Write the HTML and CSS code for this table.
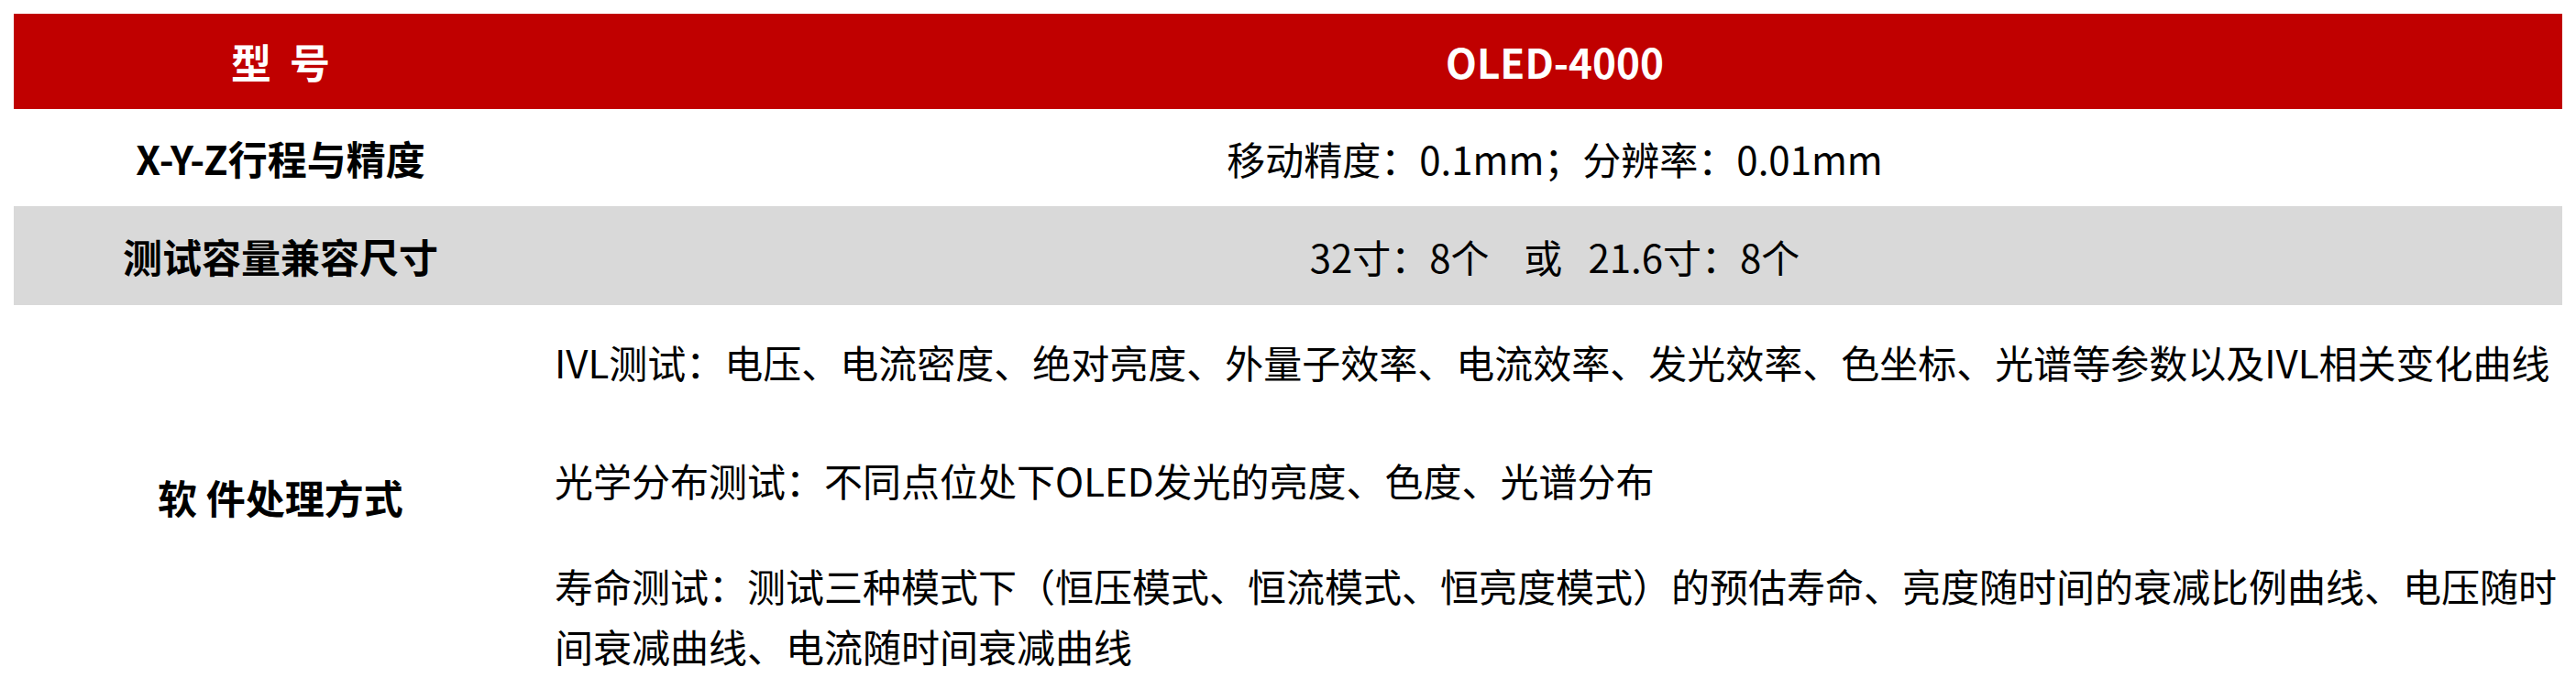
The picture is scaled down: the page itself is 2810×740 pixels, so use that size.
FILE: index.html
```html
<!DOCTYPE html>
<html lang="zh-CN">
<head>
<meta charset="utf-8">
<title>OLED-4000 规格</title>
<link rel="stylesheet" href="styles.css">
</head>
<body>
<div class="page">
  <table class="spec">
    <colgroup>
      <col class="col-label">
      <col class="col-value">
    </colgroup>
    <thead>
      <tr class="row-head">
        <th class="cell-label">型&nbsp;&nbsp;号</th>
        <th class="cell-value">OLED-4000</th>
      </tr>
    </thead>
    <tbody>
      <tr class="row-a">
        <td class="cell-label">X-Y-Z行程与精度</td>
        <td class="cell-value">移动精度：0.1mm；分辨率：0.01mm</td>
      </tr>
      <tr class="row-b">
        <td class="cell-label">测试容量兼容尺寸</td>
        <td class="cell-value">32寸：8个&nbsp;&nbsp;&nbsp;&nbsp;或&nbsp;&nbsp;&nbsp;21.6寸：8个</td>
      </tr>
      <tr class="row-c">
        <td class="cell-label">软&nbsp;件处理方式</td>
        <td class="cell-text">
          <p class="para para-1">IVL测试：电压、电流密度、绝对亮度、外量子效率、电流效率、发光效率、色坐标、光谱等参数以及IVL相关变化曲线</p>
          <p class="para para-2">光学分布测试：不同点位处下OLED发光的亮度、色度、光谱分布</p>
          <p class="para para-3">寿命测试：测试三种模式下（恒压模式、恒流模式、恒亮度模式）的预估寿命、亮度随时间的衰减比例曲线、电压随时间衰减曲线、电流随时间衰减曲线</p>
        </td>
      </tr>
    </tbody>
  </table>
</div>
</body>
</html>
```
FILE: styles.css
```css
html, body {
  margin: 0;
  padding: 0;
  background: #ffffff;
}

.page {
  padding: 15px 15px 0 15px;
  font-family: "Noto Sans CJK SC", "Noto Sans", sans-serif;
  color: #000000;
}

.spec {
  width: 2780px;
  table-layout: fixed;
  border-collapse: collapse;
  border-spacing: 0;
}

.col-label { width: 582px; }
.col-value { width: 2198px; }

.spec th,
.spec td {
  padding: 0;
  vertical-align: middle;
}

.cell-label {
  text-align: center;
  font-size: 43px;
  font-weight: 700;
}

.cell-value {
  text-align: center;
  font-size: 42px;
  font-weight: 400;
}

.row-head {
  height: 104px;
  background: #c00000;
  color: #ffffff;
}

.row-head .cell-label,
.row-head .cell-value {
  font-size: 44px;
  font-weight: 700;
}

.row-a {
  height: 106px;
  background: #ffffff;
}

.row-b {
  height: 108px;
  background: #d9d9d9;
}

.row-c {
  background: #ffffff;
}

.cell-text {
  padding: 29px 4px 13px 8px !important;
  font-size: 42px;
  line-height: 66px;
  text-align: left;
}

.para {
  margin: 0;
}

.para-1 { margin-bottom: 63px; }
.para-2 { margin-bottom: 49px; }
```
